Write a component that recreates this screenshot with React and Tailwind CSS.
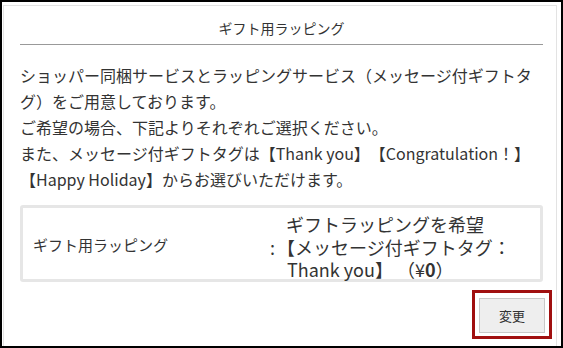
import React from 'react';

const font = { fontFamily: '"Noto Sans CJK JP", "Noto Sans", sans-serif' };

const GiftWrapping = () => {
  return (
    <div className="mt-[3px] ml-[1px] mr-[4px] h-[400px] border border-[#e3e3e3] pl-4 pr-[13px] text-[#333] [text-spacing-trim:space-all]">
      {/* Title */}
      <h2 className="pt-3 pb-[6px] text-center text-[14px] leading-[20px] border-b border-[#999]">
        ギフト用ラッピング
      </h2>

      {/* Description */}
      <div className="mt-[17px] text-[16px] leading-[26px]">
        <p>ショッパー同梱サービスとラッピングサービス（メッセージ付ギフトタグ）をご用意しております。</p>
        <p>ご希望の場合、下記よりそれぞれご選択ください。</p>
        <p>また、メッセージ付ギフトタグは【Thank you】【Congratulation！】【Happy Holiday】からお選びいただけます。</p>
      </div>

      {/* Current selection */}
      <div className="mt-[13px] h-[77px] flex items-center border-[3px] border-[#e6e6e6] rounded-[3px] pl-[10px] pt-[7px]">
        <span className="w-[237px] text-[15px] leading-[20px] -mt-[4px]">ギフト用ラッピング</span>
        <span className="w-[5px] text-[18px] leading-[22px]">:</span>
        <div className="ml-[11px] text-[18px] leading-[22.5px]">
          <div>ギフトラッピングを希望</div>
          <div className="-ml-[9px]">【メッセージ付ギフトタグ：</div>
          <div className="ml-[1px]">
            Thank you】 （¥<span className="font-bold">0</span>）
          </div>
        </div>
      </div>

      {/* Change button */}
      <div className="mt-2 -mr-[9px] flex justify-end">
        <div className="border-[3px] border-[#a00f0f] px-[4px] pt-[5px] pb-[3px]">
          <button className="w-[66px] h-[35px] bg-[#eeeeee] border border-[#c8c8c8] text-[13px] text-[#333]">
            変更
          </button>
        </div>
      </div>
    </div>
  );
};

export default function App() {
  return (
    <div className="w-[563px] h-[348px] overflow-hidden bg-white border-2 border-black" style={font}>
      <GiftWrapping />
    </div>
  );
}
